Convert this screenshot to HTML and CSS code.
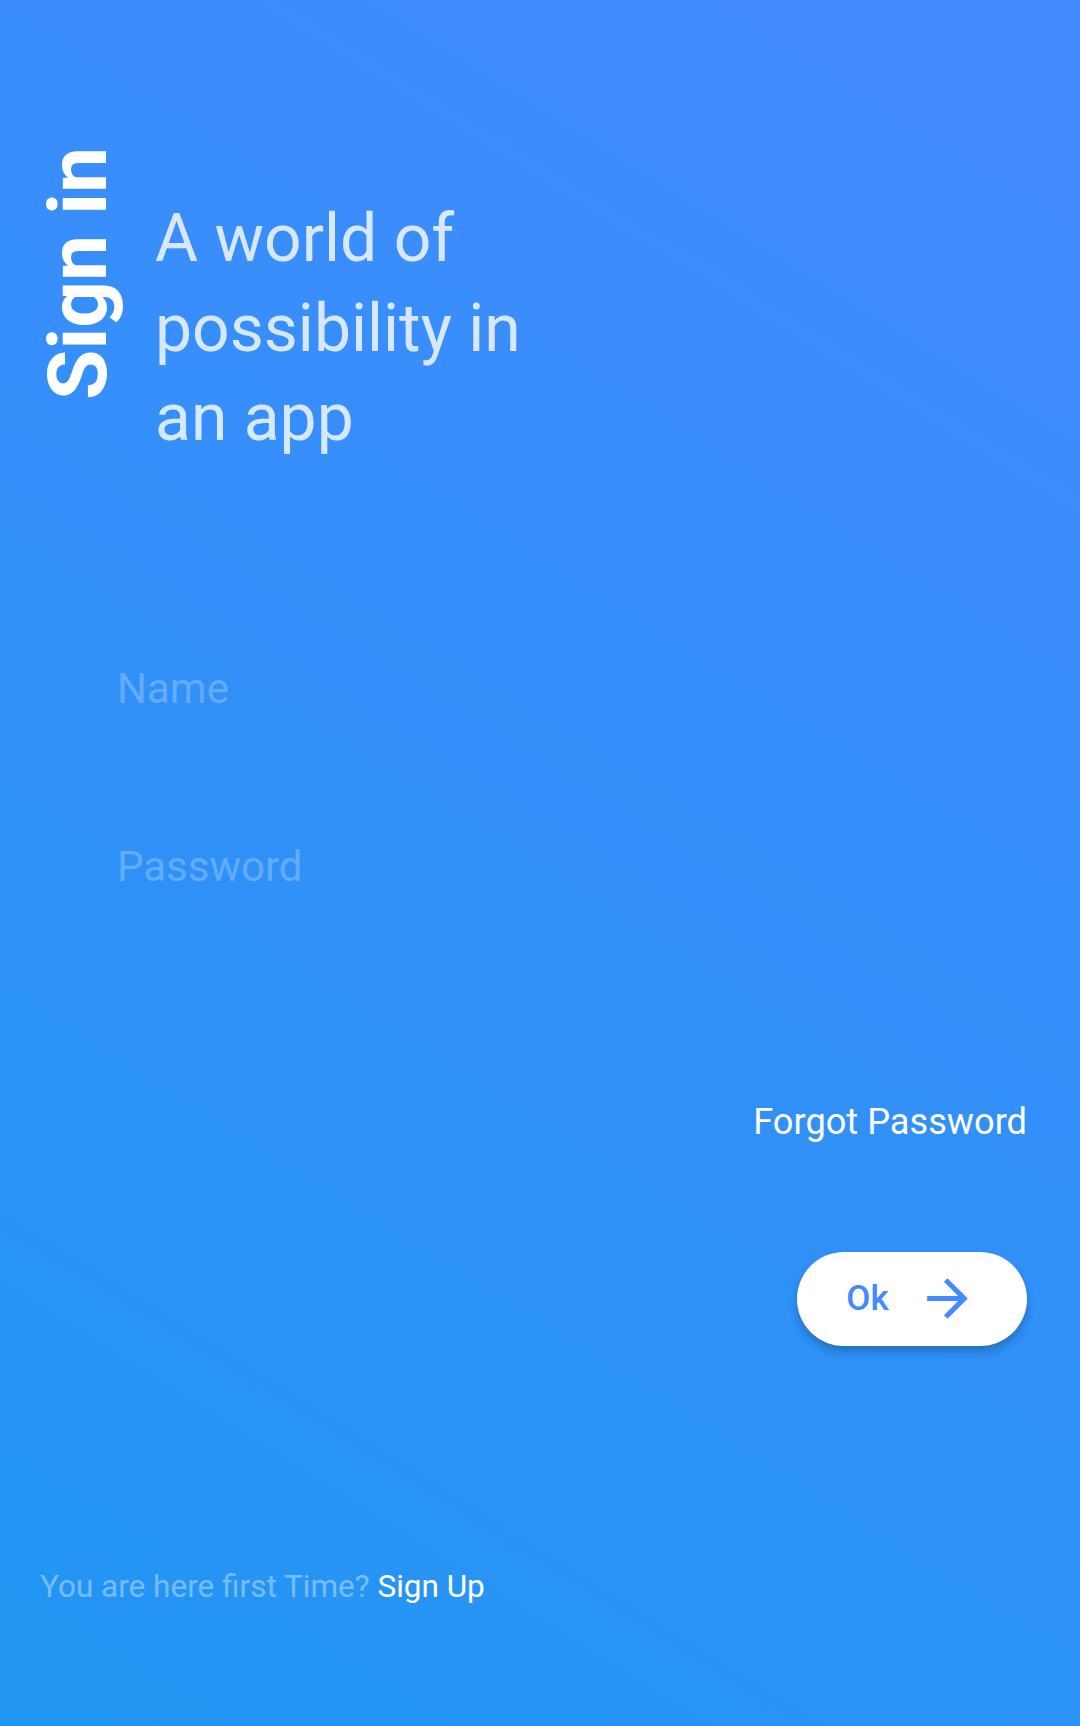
FILE: index.html
```html
<!DOCTYPE html>
<html lang="en">
<head>
<meta charset="utf-8">
<title>Sign in</title>
<link rel="stylesheet" href="styles.css">
</head>
<body>
<main class="page">
  <header class="header">
    <h1 class="title">Sign in</h1>
    <p class="tagline">A world of<br>possibility in<br>an app</p>
  </header>
  <form class="form">
    <input class="field field-name" type="text" placeholder="Name">
    <input class="field field-pass" type="password" placeholder="Password">
  </form>
  <div class="forgot-row"><a class="forgot">Forgot Password</a></div>
  <div class="button-row">
    <button class="ok-btn" type="button">
      <span class="ok-label">Ok</span>
      <svg class="ok-icon" viewBox="0 0 24 24" aria-hidden="true"><path d="M12 4l-1.41 1.41L16.17 11H4v2h12.17l-5.58 5.59L12 20l8-8z"/></svg>
    </button>
  </div>
  <p class="signup">You are here first Time? <a class="signup-link">Sign Up</a></p>
</main>
</body>
</html>
```
FILE: styles.css
```css
html, body {
  margin: 0;
  padding: 0;
}
body {
  width: 1080px;
  height: 1726px;
  overflow: hidden;
  font-family: Roboto, "Liberation Sans", sans-serif;
  background: linear-gradient(212deg, #448aff 0%, #2196f3 100%);
}
.page {
  display: flex;
  flex-direction: column;
  height: 1726px;
}
.header {
  display: flex;
  align-items: flex-start;
  padding-top: 147px;
  padding-left: 30px;
  gap: 29px;
}
.title {
  margin: 0;
  writing-mode: vertical-rl;
  transform: rotate(180deg);
  font-size: 82px;
  font-weight: 700;
  line-height: 96px;
  color: #ffffff;
  white-space: nowrap;
}
.tagline {
  margin: 47px 0 0 0;
  font-size: 66px;
  font-weight: 400;
  line-height: 89.5px;
  color: rgba(255, 255, 255, 0.8);
}
.form {
  display: flex;
  flex-direction: column;
  gap: 126px;
  margin: 200px 0 0 117px;
}
.field {
  width: 800px;
  padding: 0;
  border: none;
  background: transparent;
  outline: none;
  font-family: Roboto, "Liberation Sans", sans-serif;
  font-size: 42px;
  line-height: 52px;
  height: 52px;
  color: #ffffff;
}
.field::placeholder {
  color: rgba(255, 255, 255, 0.25);
}
.forgot-row {
  display: flex;
  justify-content: flex-end;
  padding-right: 53px;
  margin-top: 206px;
}
.forgot {
  font-size: 36.2px;
  line-height: 45px;
  color: #ffffff;
}
.button-row {
  display: flex;
  justify-content: flex-end;
  padding-right: 53px;
  margin-top: 108px;
}
.ok-btn {
  display: flex;
  align-items: center;
  justify-content: center;
  gap: 28px;
  width: 230px;
  height: 94px;
  padding: 0;
  border: none;
  border-radius: 47px;
  background: #ffffff;
  box-shadow: 0 6px 10px rgba(0, 0, 0, 0.22);
  font-family: Roboto, "Liberation Sans", sans-serif;
}
.ok-label {
  font-size: 35px;
  font-weight: 500;
  color: #448aff;
}
.ok-icon {
  width: 61px;
  height: 61px;
  fill: #448aff;
}
.signup {
  margin: 221px 0 0 40px;
  font-size: 31.5px;
  line-height: 39px;
  color: rgba(255, 255, 255, 0.4);
}
.signup-link {
  color: #ffffff;
}
```
